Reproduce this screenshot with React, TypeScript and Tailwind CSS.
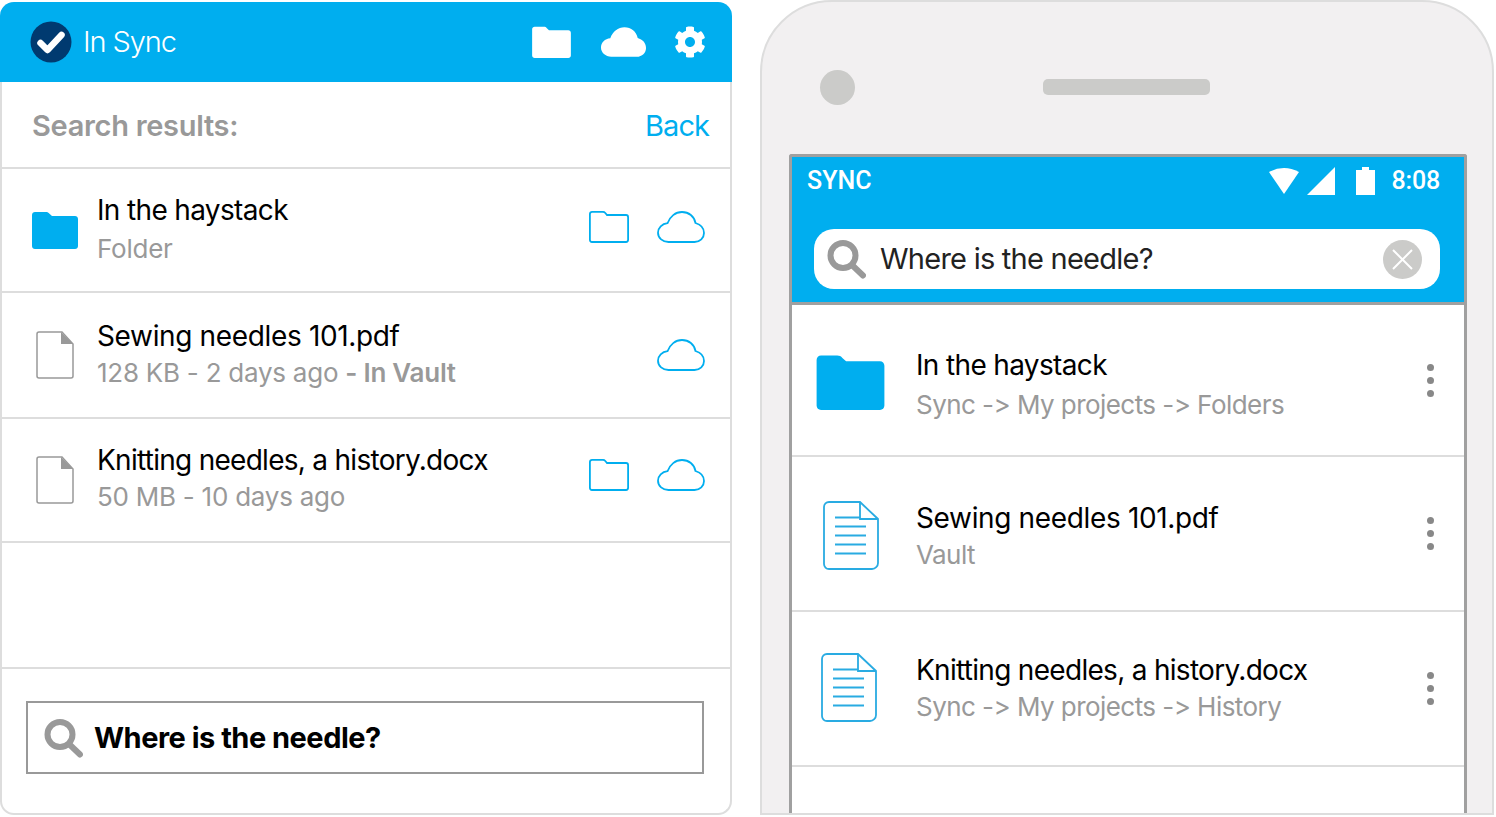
import { FaCog } from "react-icons/fa";

const Folder = ({ className = "" }: { className?: string }) => (
  <svg viewBox="0 0 46 38" className={className} fill="currentColor">
    <path d="M3 1h11c1.500 0 2.500.5 3.500 1.700L20 5h23c1.700 0 3 1.300 3 3v27c0 1.700-1.300 3-3 3H3c-1.700 0-3-1.300-3-3V4c0-1.700 1.300-3 3-3z" />
  </svg>
);

const FolderLine = () => (
  <svg viewBox="0 0 40 32" className="h-8 w-10" fill="none" stroke="#00aeef" strokeWidth="1.800">
    <path d="M3 .9h11c1 0 1.700.4 2.300 1.100L18 4h19c1.200 0 2.100 1 2.100 2.200v22.600c0 1.200-.9 2.200-2.100 2.200H3c-1.200 0-2.100-1-2.100-2.200V3C.9 1.800 1.800.9 3 .9z" />
  </svg>
);

const Cloud = ({ className = "" }: { className?: string }) => (
  <svg viewBox="0 0 48 32" className={className}>
    <path d="M11.500 31C5.700 31 1 27 1 21.700c0-5 4-9 9.500-9.500C13 5.500 18.500 1 25 1c6.800 0 12.300 4.500 13.500 11C43.500 13.500 47 17 47 22c0 5-4 9-9.500 9z" />
  </svg>
);

const SearchIcon = () => (
  <svg viewBox="0 0 40 40" className="h-10 w-10 shrink-0" fill="none" stroke="#999999">
    <circle cx="17" cy="16.500" r="12.500" strokeWidth="6" />
    <path d="M26 26l11 10.500" strokeWidth="6" strokeLinecap="round" />
  </svg>
);

const FileGray = () => (
  <svg viewBox="0 0 38 48" className="h-12 w-[38px]">
    <path d="M3 1h23l11 12v32c0 1.100-.9 2-2 2H3c-1.100 0-2-.9-2-2V3c0-1.100.9-2 2-2z" fill="none" stroke="#999999" strokeWidth="1.500" />
    <path d="M25 1l12 12H25z" fill="#999999" />
  </svg>
);

const FileBlue = () => (
  <svg viewBox="0 0 56 69" className="h-[69px] w-14" fill="none" stroke="#29abe2" strokeWidth="1.800">
    <path d="M6 1h31l18 17v44c0 3.300-2.700 6-6 6H6c-2.800 0-5-2.200-5-5V6c0-2.800 2.200-5 5-5z" />
    <path d="M37 1v17h18" />
    <path d="M12 16.500h25M12 25.500h31M12 34.500h31M12 43.500h31M12 52.500h31" strokeWidth="2" />
  </svg>
);

const Dots = () => (
  <div className="flex flex-col gap-[6px]">
    <span className="h-[7px] w-[7px] rounded-full bg-[#888888]" />
    <span className="h-[7px] w-[7px] rounded-full bg-[#888888]" />
    <span className="h-[7px] w-[7px] rounded-full bg-[#888888]" />
  </div>
);

const Title = ({ children, className }: { children: string; className: string }) => (
  <div className={`text-[28px] leading-[38px] text-black ${className}`}>{children}</div>
);

const Sub = ({ children, className }: { children: React.ReactNode; className: string }) => (
  <div className={`text-[26px] leading-[36px] text-[#999999] ${className}`}>{children}</div>
);

const ResultRow = ({
  icon,
  iconClass,
  title,
  titleClass,
  sub,
  folder,
  h,
  textClass,
  actionsClass,
}: {
  icon: React.ReactNode;
  iconClass: string;
  title: string;
  titleClass: string;
  sub: React.ReactNode;
  folder?: boolean;
  h: string;
  textClass: string;
  actionsClass: string;
}) => (
  <div className={`flex items-center border-b-2 border-[#dddddd] pr-[25px] ${h}`}>
    <div className={`flex w-[95px] shrink-0 ${iconClass}`}>{icon}</div>
    <div className={`flex flex-1 flex-col ${textClass}`}>
      <Title className={titleClass}>{title}</Title>
      <Sub className="tracking-[-0.25px]">{sub}</Sub>
    </div>
    <div className={`flex items-center gap-7 ${actionsClass}`}>
      {folder && <FolderLine />}
      <Cloud className="h-8 w-12 fill-none stroke-[#00aeef] stroke-[1.8]" />
    </div>
  </div>
);

const PhoneRow = ({
  icon,
  title,
  titleClass,
  sub,
  h,
  textClass,
  iconClass,
}: {
  icon: React.ReactNode;
  title: string;
  titleClass: string;
  sub: string;
  h: string;
  textClass: string;
  iconClass: string;
}) => (
  <div className={`flex items-center border-b-2 border-[#dddddd] pr-[30px] ${h}`}>
    <div className={`flex w-[124px] shrink-0 ${iconClass}`}>{icon}</div>
    <div className={`flex flex-1 flex-col ${textClass}`}>
      <Title className={titleClass}>{title}</Title>
      <Sub className="tracking-[-0.55px]">{sub}</Sub>
    </div>
    <Dots />
  </div>
);

export default function App() {
  return (
    <div className="flex h-[817px] w-[1496px] items-start gap-[28px] overflow-hidden bg-white font-['Inter',sans-serif]">
      <div className="mt-[2px] w-[732px] shrink-0">
        <div className="flex h-20 items-center rounded-t-[14px] bg-[#00aeef] pr-[26px] pl-[30px]">
          <svg viewBox="0 0 42 42" className="h-[42px] w-[42px]">
            <circle cx="21" cy="21" r="20.500" fill="#003a70" />
            <path d="M10.500 22l7 7 14-15" fill="none" stroke="#ffffff" strokeWidth="6.500" strokeLinecap="round" strokeLinejoin="round" />
          </svg>
          <span className="ml-[11px] flex-1 text-[29px] font-light tracking-[-1.1px] text-white">In Sync</span>
          <Folder className="h-8 w-[39px] text-white" />
          <Cloud className="ml-[29px] h-[32px] w-[47px] fill-white" />
          <FaCog className="ml-[27px] h-8 w-8 text-white" />
        </div>
        <div className="h-[733px] rounded-b-[14px] border-x-2 border-b-2 border-[#dddddd]">
          <div className="flex h-[87px] items-center justify-between border-b-2 border-[#dddddd] pr-[21px] pl-[30px]">
            <span className="pt-[2px] text-[29px] font-semibold tracking-[-0.3px] text-[#999999]">Search results:</span>
            <span className="pt-[2px] text-[29px] tracking-[-0.95px] text-[#00aeef]">Back</span>
          </div>
          <ResultRow
            h="h-[124px]"
            icon={<Folder className="h-[38px] w-[46px] text-[#00aeef]" />}
            iconClass="pl-[30px]"
            title="In the haystack"
            titleClass="tracking-[-0.65px]"
            sub="Folder"
            folder
            textClass="gap-[2px] pb-[3px]"
            actionsClass="pb-[6px]"
          />
          <ResultRow
            h="h-[126px]"
            icon={<FileGray />}
            iconClass="pl-[34px]"
            title="Sewing needles 101.pdf"
            titleClass="tracking-[-0.35px]"
            sub={
              <>
                128 KB - 2 days ago <span className="font-semibold">- In Vault</span>
              </>
            }
            textClass="pb-[2px]"
            actionsClass=""
          />
          <ResultRow
            h="h-[124px]"
            icon={<FileGray />}
            iconClass="pl-[34px]"
            title="Knitting needles, a history.docx"
            titleClass="tracking-[-0.72px]"
            sub="50 MB - 10 days ago"
            folder
            textClass="pb-[4px]"
            actionsClass="pb-[10px]"
          />
          <div className="h-[126px] border-b-2 border-[#dddddd]" />
          <div className="pt-[32px] pr-[26px] pl-[24px]">
            <div className="flex h-[73px] items-center gap-[11px] border-2 border-[#999999] pl-[15px]">
              <SearchIcon />
              <span className="text-[29px] font-bold tracking-[-0.5px] text-black">Where is the needle?</span>
            </div>
          </div>
        </div>
      </div>

      <div className="h-[815px] w-[734px] shrink-0 overflow-hidden rounded-t-[72px] border-2 border-[#dddddd] bg-[#f2f0f1] pt-[66px] pr-[25px] pl-[27px]">
        <div className="flex h-[86px] items-start pt-[2px] pl-[31px]">
          <div className="h-[35px] w-[35px] rounded-full bg-[#cbcbc9]" />
          <div className="mt-[9px] ml-[188px] h-4 w-[167px] rounded-[5px] bg-[#cbcbc9]" />
        </div>
        <div className="h-[662px] rounded-t-[3px] border-x-[3px] border-t-[3px] border-[#a0a0a0] bg-white">
          <div className="h-[148px] border-b-[3px] border-[#a0a0a0] bg-[#00aeef] pr-[24px] pl-[22px]">
            <div className="flex h-[47px] items-center text-white">
              <span className="-ml-[7px] flex-1 font-['Roboto',sans-serif] text-[25px] font-medium">SYNC</span>
              <svg viewBox="0 0 30 27" className="h-[27px] w-[30px] fill-white">
                <path d="M0 5Q15-3 30 5L15 27z" />
              </svg>
              <svg viewBox="0 0 28 28" className="ml-2 h-7 w-7 fill-white">
                <path d="M28 0v28H0z" />
              </svg>
              <svg viewBox="0 0 19 28" className="mr-px ml-[21px] h-7 w-[19px] fill-white">
                <path d="M6 0h7v3h6v25H0V3h6z" />
              </svg>
              <span className="ml-[16px] font-['Roboto',sans-serif] text-[25px] font-medium tracking-[-0.2px]">8:08</span>
            </div>
            <div className="mt-[25px] flex h-[60px] items-center rounded-[20px] bg-white pr-[18px] pl-[12px]">
              <SearchIcon />
              <span className="ml-[14px] flex-1 text-[29px] tracking-[-0.75px] text-[#222222]">Where is the needle?</span>
              <svg viewBox="0 0 39 39" className="h-[39px] w-[39px]">
                <circle cx="19.500" cy="19.500" r="19.500" fill="#cbcbc9" />
                <path d="M10 10l19 19M29 10L10 29" stroke="#ffffff" strokeWidth="2" />
              </svg>
            </div>
          </div>
          <PhoneRow
            h="h-[152px]"
            icon={<Folder className="h-14 w-[69px] text-[#00aeef]" />}
            iconClass="pl-[24px] pt-[4px]"
            title="In the haystack"
            titleClass="tracking-[-0.65px]"
            sub="Sync -> My projects -> Folders"
            textClass="gap-[3px] pt-[8px]"
          />
          <PhoneRow
            h="h-[155px]"
            icon={<FileBlue />}
            iconClass="pl-[31px] pt-[4px]"
            title="Sewing needles 101.pdf"
            titleClass="tracking-[-0.35px]"
            sub="Vault"
            textClass="pt-[4px]"
          />
          <PhoneRow
            h="h-[155px]"
            icon={<FileBlue />}
            iconClass="pl-[29px] pb-[2px]"
            title="Knitting needles, a history.docx"
            titleClass="tracking-[-0.7px]"
            sub="Sync -> My projects -> History"
            textClass="pb-[2px]"
          />
        </div>
      </div>
    </div>
  );
}
